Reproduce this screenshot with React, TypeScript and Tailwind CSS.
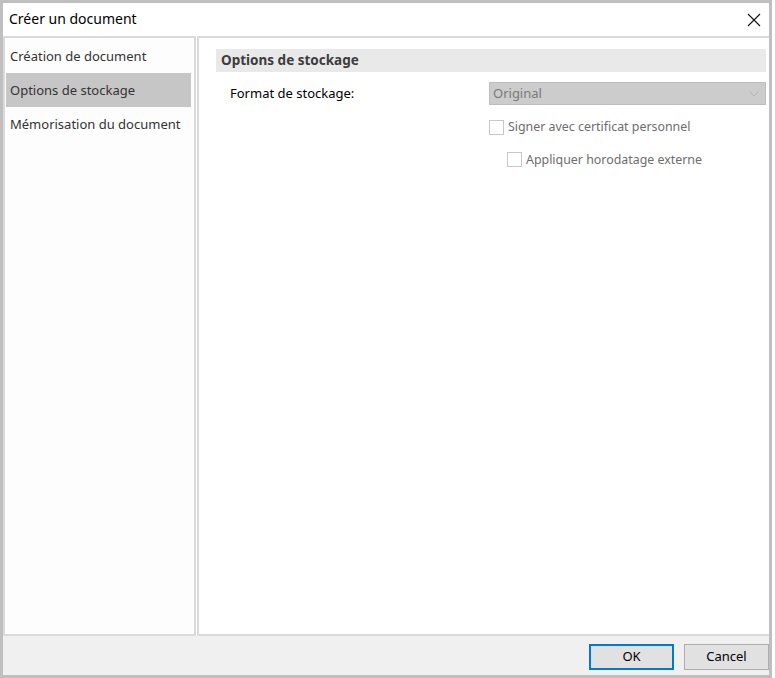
import React from "react";

function Checkbox({ label, className }: { label: string; className?: string }) {
  return (
    <div className={"flex items-center " + (className || "")}>
      <span className="w-[15px] h-[15px] border border-[#c8c8c8] bg-white mr-[4px]"></span>
      <span className="text-[12.4px] text-[#6d6d6d]">{label}</span>
    </div>
  );
}

export default function App() {
  const navItems = ["Création de document", "Options de stockage", "Mémorisation du document"];
  return (
    <div className="w-[775px] h-[678px] bg-white" style={{ fontFamily: '"Noto Sans", "DejaVu Sans", sans-serif' }}>
      <div className="w-[772px] h-[678px] border-[3px] border-[#bfbfbf] flex flex-col bg-white">
        {/* title bar */}
        <div className="h-[31px] flex items-center justify-between pl-[6px] pr-[6px] shrink-0">
          <span className="text-[14px] text-black">Créer un document</span>
          <svg width="14" height="14" viewBox="0 0 14 14" className="mr-[2px] mt-[2px]">
            <path d="M1 1 L13 13 M13 1 L1 13" stroke="#111" strokeWidth="1.1" />
          </svg>
        </div>
        {/* body */}
        <div className="flex-1 flex gap-[1px] min-h-0 mt-[2px]">
          <div className="w-[193px] border-2 border-[#dadada] bg-[#fdfdfd] pt-[1px]">
            {navItems.map((item, i) => (
              <div
                key={item}
                className={
                  "h-[34px] flex items-center pl-[4px] pt-[2px] ml-[1px] w-[185px] text-[13px] text-[#333] " +
                  (i === 1 ? "bg-[#c6c6c6]" : "")
                }
              >
                {item}
              </div>
            ))}
          </div>
          <div className="flex-1 border-2 border-[#dadada] border-r-0 pt-[11px] pl-[17px] pr-[3px]">
            <div className="h-[23px] bg-[#e9e9e9] flex items-center pl-[5px] text-[13.5px] font-bold text-[#3c3c3c]">
              Options de stockage
            </div>
            <div className="flex items-center mt-[10px]">
              <div className="w-[273px] pl-[14px] text-[13px] text-black">Format de stockage:</div>
              <div className="flex-1 h-[23px] bg-[#cccccc] border border-[#bdbdbd] flex items-center justify-between pl-[3px] pr-[6px]">
                <span className="text-[13px] text-[#7a7a7a]">Original</span>
                <svg width="10" height="6" viewBox="0 0 10 6">
                  <path d="M0.5 0.5 L5 5 L9.5 0.5" fill="none" stroke="#b5b5b5" strokeWidth="1" />
                </svg>
              </div>
            </div>
            <Checkbox label="Signer avec certificat personnel" className="ml-[273px] mt-[13px]" />
            <Checkbox label="Appliquer horodatage externe" className="ml-[291px] mt-[14px]" />
          </div>
        </div>
        {/* footer */}
        <div className="h-[39px] bg-[#f0f0f0] shrink-0 flex items-start pt-[8px] justify-end gap-[10px]">
          <button className="w-[85px] h-[26px] bg-[#e1e1e1] border-2 border-[#0078d7] text-[13px] text-black">
            OK
          </button>
          <button className="w-[85px] h-[26px] bg-[#e1e1e1] border border-[#adadad] text-[13px] text-black">
            Cancel
          </button>
        </div>
      </div>
    </div>
  );
}
